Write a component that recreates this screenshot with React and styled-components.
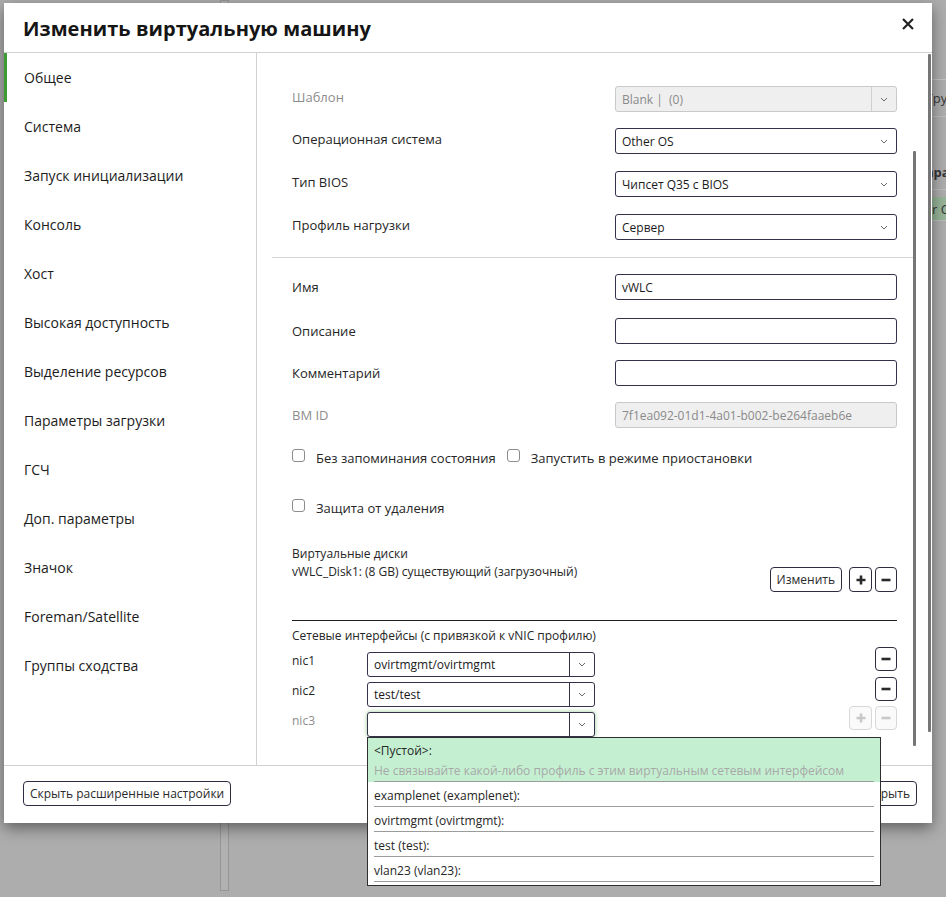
import React from 'react';
import styled, { createGlobalStyle } from 'styled-components';

const GlobalStyle = createGlobalStyle`
  html, body {
    margin: 0;
    padding: 0;
  }
  body {
    font-family: "Open Sans", "Noto Sans", sans-serif;
    background: #adadad;
    color: #1f1f1f;
    overflow: hidden;
  }
  * { box-sizing: border-box; }
`;

/* ---------- dimmed application behind the dialog ---------- */

const Backdrop = styled.div`
  position: relative;
  width: 946px;
  height: 897px;
  background: #adadad;
  display: flex;
  overflow: hidden;
`;

const BgSide = styled.div`
  width: 220px;
  flex: none;
`;

const BgSplitter = styled.div`
  width: 9px;
  flex: none;
  margin-bottom: 6px;
  border: 1px solid #969696;
  background: #b1b1b1;
`;

const BgMain = styled.div`
  flex: 1;
  display: flex;
  justify-content: flex-end;
`;

const BgGrid = styled.div`
  width: 50px;
  padding-top: 79px;
  font-size: 13px;
  color: #363636;
  white-space: nowrap;
  overflow: hidden;
`;

const BgRow = styled.div`
  height: ${(p) => p.$h}px;
  padding-left: ${(p) => p.$indent}px;
  padding-top: ${(p) => p.$pt || 0}px;
  margin-top: ${(p) => p.$mt || 0}px;
  line-height: ${(p) => p.$lh || 18}px;
  font-weight: ${(p) => (p.$bold ? 700 : 400)};
  background: ${(p) => p.$bg || 'transparent'};
  border-top: ${(p) => (p.$top ? '1px solid #c4c4c4' : 'none')};
  border-bottom: 1px solid #bdbdbd;
`;

/* ---------- dialog ---------- */

const Dialog = styled.div`
  position: absolute;
  left: 4px;
  top: 3px;
  width: 928px;
  height: 820px;
  background: #fff;
  box-shadow: 0 5px 14px rgba(0, 0, 0, 0.45);
  display: flex;
  flex-direction: column;
`;

const Header = styled.div`
  height: 50px;
  flex: none;
  display: flex;
  align-items: center;
  justify-content: space-between;
  padding: 0 17px 0 19px;
  border-bottom: 1px solid #d1d1d1;
`;

const Title = styled.h1`
  margin: 2px 0 0;
  font-size: 20px;
  font-weight: 700;
  color: #151515;
  letter-spacing: 0.05px;
`;

const CloseButton = styled.button`
  align-self: flex-start;
  margin-top: 14px;
  width: 14px;
  height: 14px;
  padding: 0;
  border: 0;
  background: none;
  display: flex;
  align-items: center;
  justify-content: center;
  cursor: pointer;
`;

const Body = styled.div`
  flex: 1;
  display: flex;
  min-height: 0;
`;

const Nav = styled.nav`
  width: 253px;
  flex: none;
  border-right: 1px solid #d1d1d1;
  display: flex;
  flex-direction: column;
`;

const NavItem = styled.div`
  height: 49px;
  flex: none;
  display: flex;
  align-items: center;
  padding-left: 17px;
  border-left: 3px solid ${(p) => (p.$active ? '#3f9c35' : 'transparent')};
  font-size: 14px;
  color: #1c1c1c;
`;

const Pane = styled.div`
  position: relative;
  flex: 1;
  display: flex;
  flex-direction: column;
`;

const Block = styled.div`
  padding: ${(p) => p.$pt || 0}px 35px 0;
  display: flex;
  flex-direction: column;
`;

const SectionRule = styled.div`
  height: 1px;
  margin: 17px 16px 0 15px;
  background: #d6d6d6;
`;

const Field = styled.div`
  display: flex;
  align-items: center;
  height: 26px;
  margin-top: ${(p) => p.$mt || 0}px;
`;

const Label = styled.div`
  width: 323px;
  flex: none;
  margin-top: ${(p) => (p.$up ? -5 : 0)}px;
  font-size: 13px;
  color: ${(p) => (p.$muted ? '#8d8d8d' : '#262626')};
`;

const Control = styled.div`
  position: relative;
  width: ${(p) => p.$w || 282}px;
  height: ${(p) => p.$h || 26}px;
  flex: none;
  display: flex;
  align-items: center;
  border: 1px solid ${(p) => (p.$disabled ? '#c9c9c9' : '#34324a')};
  border-radius: 3px;
  background: ${(p) => (p.$disabled ? '#efefef' : '#fff')};
  box-shadow: ${(p) => (p.$focus ? '0 0 4px rgba(63, 156, 53, 0.55)' : 'none')};
  font-size: 12px;
  color: ${(p) => (p.$disabled ? '#8a8a8a' : '#1a1a1a')};
`;

const Value = styled.span`
  flex: 1;
  padding-left: 6px;
  white-space: pre;
  overflow: hidden;
`;

const Caret = styled.span`
  width: 25px;
  height: 100%;
  flex: none;
  display: flex;
  align-items: center;
  justify-content: center;
  border-left: ${(p) => (p.$split ? `1px solid ${p.$disabled ? '#cfcfcf' : '#34324a'}` : 'none')};
`;

const CheckRow = styled.div`
  display: flex;
  align-items: flex-start;
  height: 20px;
  margin-top: ${(p) => p.$mt}px;
`;

const Check = styled.label`
  display: flex;
  align-items: flex-start;
  margin-right: 11px;
  font-size: 13px;
  line-height: 20px;
  color: #262626;
`;

const Box = styled.span`
  width: 13px;
  height: 13px;
  margin: 1px 11px 0 0;
  flex: none;
  border: 1px solid #8c8c8c;
  border-radius: 3px;
  background: #fff;
`;

const Caption = styled.div`
  font-size: 12px;
  line-height: 18px;
  color: #262626;
  margin-top: ${(p) => p.$mt || 0}px;
`;

const DiskRow = styled.div`
  display: flex;
  align-items: flex-start;
  justify-content: space-between;
`;

const Actions = styled.div`
  display: flex;
  gap: 3px;
  margin-top: ${(p) => p.$mt || 0}px;
  margin-left: auto;
`;

const Button = styled.button`
  height: ${(p) => p.$h || 25}px;
  min-width: ${(p) => p.$w || 0}px;
  padding: 0 ${(p) => (p.$w ? 0 : 6)}px;
  margin-right: ${(p) => p.$mr || 0}px;
  display: flex;
  align-items: center;
  justify-content: center;
  border: 1px solid ${(p) => (p.disabled ? '#d8d8d8' : '#2f2d40')};
  border-radius: 4px;
  background: ${(p) => (p.disabled ? '#fafafa' : '#fff')};
  font-family: inherit;
  font-size: 12px;
  color: #2a2a2a;
  cursor: pointer;
`;

const DarkRule = styled.div`
  height: 1px;
  margin-top: 28px;
  background: #1e1e1e;
`;

const NicRow = styled.div`
  display: flex;
  align-items: flex-start;
  margin-top: ${(p) => p.$mt}px;
`;

const NicLabel = styled.div`
  width: 75px;
  flex: none;
  font-size: 12px;
  line-height: 18px;
  color: ${(p) => (p.$muted ? '#8d8d8d' : '#262626')};
`;

const Menu = styled.ul`
  position: absolute;
  top: calc(100% + 1px);
  left: -1px;
  z-index: 10;
  width: 514px;
  margin: 0;
  padding: 0 0 3px;
  list-style: none;
  background: #fff;
  border: 1px solid #2e2e2e;
  font-size: 12px;
`;

const MenuItem = styled.li`
  padding: 0 6px;
  background: ${(p) => (p.$selected ? '#c4f0d1' : '#fff')};
`;

const MenuInner = styled.div`
  padding-top: ${(p) => (p.$first ? 3 : 4)}px;
  line-height: 20px;
  border-bottom: 1px solid #9c9c9c;
  color: #262626;
  white-space: nowrap;
`;

const MenuHint = styled.div`
  color: #a8a8a8;
`;

const ScrollBar = styled.div`
  position: absolute;
  right: ${(p) => p.$right}px;
  top: ${(p) => p.$top}px;
  width: 3px;
  height: ${(p) => p.$h}px;
  border-radius: 1px;
  background: #767676;
`;

const Footer = styled.div`
  height: 58px;
  flex: none;
  display: flex;
  align-items: center;
  justify-content: space-between;
  padding: 0 15px 2px 19px;
  border-top: 1px solid #d1d1d1;
`;

/* ---------- small drawings ---------- */

const Chevron = () => (
  <svg width="8" height="5" viewBox="0 0 8 5">
    <path d="M1 1l3 3 3-3" fill="none" stroke="#6a6a6a" strokeWidth="1" />
  </svg>
);

const PlusIcon = ({ muted }) => (
  <svg width="10" height="10" viewBox="0 0 10 10">
    <path d="M5 0.5v9M0.5 5h9" stroke={muted ? '#c8c8c8' : '#2a2a2a'} strokeWidth="2.6" />
  </svg>
);

const MinusIcon = ({ muted }) => (
  <svg width="10" height="10" viewBox="0 0 10 10">
    <path d="M0.5 5h9" stroke={muted ? '#c8c8c8' : '#2a2a2a'} strokeWidth="2.6" />
  </svg>
);

const CloseIcon = () => (
  <svg width="12" height="12" viewBox="0 0 12 12">
    <path d="M1 1l10 10M11 1L1 11" stroke="#232323" strokeWidth="2.2" />
  </svg>
);

const Select = ({ value, disabled, split, width, height, focus, children }) => (
  <Control $disabled={disabled} $w={width} $h={height} $focus={focus}>
    <Value>{value}</Value>
    <Caret $split={split} $disabled={disabled}>
      <Chevron />
    </Caret>
    {children}
  </Control>
);

const navItems = [
  'Общее',
  'Система',
  'Запуск инициализации',
  'Консоль',
  'Хост',
  'Высокая доступность',
  'Выделение ресурсов',
  'Параметры загрузки',
  'ГСЧ',
  'Доп. параметры',
  'Значок',
  'Foreman/Satellite',
  'Группы сходства',
];

const profiles = [
  'examplenet (examplenet):',
  'ovirtmgmt (ovirtmgmt):',
  'test (test):',
  'vlan23 (vlan23):',
];

export default function App() {
  return (
    <>
      <GlobalStyle />
      <Backdrop>
        <BgSide />
        <BgSplitter />
        <BgMain>
          <BgGrid>
            <BgRow $h={38} $indent={30} $pt={9} $top>
              Группа
            </BgRow>
            <BgRow $h={73} $indent={20} $pt={46} $bold>
              Параметры
            </BgRow>
            <BgRow $h={24} $indent={6} $pt={3} $mt={7} $bg="#96b497">
              Other Cluster
            </BgRow>
          </BgGrid>
        </BgMain>

        <Dialog>
          <Header>
            <Title>Изменить виртуальную машину</Title>
            <CloseButton aria-label="Закрыть">
              <CloseIcon />
            </CloseButton>
          </Header>

          <Body>
            <Nav>
              {navItems.map((item, i) => (
                <NavItem key={item} $active={i === 0}>
                  {item}
                </NavItem>
              ))}
            </Nav>

            <Pane>
              <Block $pt={33}>
                <Field>
                  <Label $muted $up>Шаблон</Label>
                  <Select value="Blank |  (0)" disabled split />
                </Field>
                <Field $mt={16}>
                  <Label $up>Операционная система</Label>
                  <Select value="Other OS" />
                </Field>
                <Field $mt={17}>
                  <Label $up>Тип BIOS</Label>
                  <Select value="Чипсет Q35 с BIOS" />
                </Field>
                <Field $mt={17}>
                  <Label $up>Профиль нагрузки</Label>
                  <Select value="Сервер" />
                </Field>
              </Block>

              <SectionRule />

              <Block $pt={16}>
                <Field>
                  <Label>Имя</Label>
                  <Control>
                    <Value>vWLC</Value>
                  </Control>
                </Field>
                <Field $mt={18}>
                  <Label>Описание</Label>
                  <Control />
                </Field>
                <Field $mt={16}>
                  <Label>Комментарий</Label>
                  <Control />
                </Field>
                <Field $mt={16}>
                  <Label $muted>ВМ ID</Label>
                  <Control $disabled>
                    <Value>7f1ea092-01d1-4a01-b002-be264faaeb6e</Value>
                  </Control>
                </Field>

                <CheckRow $mt={20}>
                  <Check>
                    <Box />
                    Без запоминания состояния
                  </Check>
                  <Check>
                    <Box />
                    Запустить в режиме приостановки
                  </Check>
                </CheckRow>
                <CheckRow $mt={30}>
                  <Check>
                    <Box />
                    Защита от удаления
                  </Check>
                </CheckRow>

                <Caption $mt={27}>Виртуальные диски</Caption>
                <DiskRow>
                  <Caption>vWLC_Disk1: (8 GB) существующий (загрузочный)</Caption>
                  <Actions $mt={4}>
                    <Button $mr={4}>Изменить</Button>
                    <Button $w={23}>
                      <PlusIcon />
                    </Button>
                    <Button $w={22}>
                      <MinusIcon />
                    </Button>
                  </Actions>
                </DiskRow>

                <DarkRule />

                <Caption $mt={6}>Сетевые интерфейсы (с привязкой к vNIC профилю)</Caption>

                <NicRow $mt={7}>
                  <NicLabel>nic1</NicLabel>
                  <Select value="ovirtmgmt/ovirtmgmt" split width={228} height={25} />
                  <Actions $mt={-5}>
                    <Button $w={22} $h={24}>
                      <MinusIcon />
                    </Button>
                  </Actions>
                </NicRow>
                <NicRow $mt={5}>
                  <NicLabel>nic2</NicLabel>
                  <Select value="test/test" split width={228} height={25} />
                  <Actions $mt={-5}>
                    <Button $w={22} $h={24}>
                      <MinusIcon />
                    </Button>
                  </Actions>
                </NicRow>
                <NicRow $mt={5}>
                  <NicLabel $muted>nic3</NicLabel>
                  <Select value="" split width={228} height={25} focus>
                    <Menu>
                      <MenuItem $selected>
                        <MenuInner $first>
                          &lt;Пустой&gt;:
                          <MenuHint>
                            Не связывайте какой-либо профиль с этим виртуальным сетевым интерфейсом
                          </MenuHint>
                        </MenuInner>
                      </MenuItem>
                      {profiles.map((p) => (
                        <MenuItem key={p}>
                          <MenuInner>{p}</MenuInner>
                        </MenuItem>
                      ))}
                    </Menu>
                  </Select>
                  <Actions $mt={-6}>
                    <Button $w={23} $h={24} disabled>
                      <PlusIcon muted />
                    </Button>
                    <Button $w={22} $h={24} disabled>
                      <MinusIcon muted />
                    </Button>
                  </Actions>
                </NicRow>
              </Block>

              <ScrollBar $right={1} $top={1} $h={678} />
              <ScrollBar $right={16} $top={98} $h={595} />
            </Pane>
          </Body>

          <Footer>
            <Button>Скрыть расширенные настройки</Button>
            <Button>Закрыть</Button>
          </Footer>
        </Dialog>
      </Backdrop>
    </>
  );
}
